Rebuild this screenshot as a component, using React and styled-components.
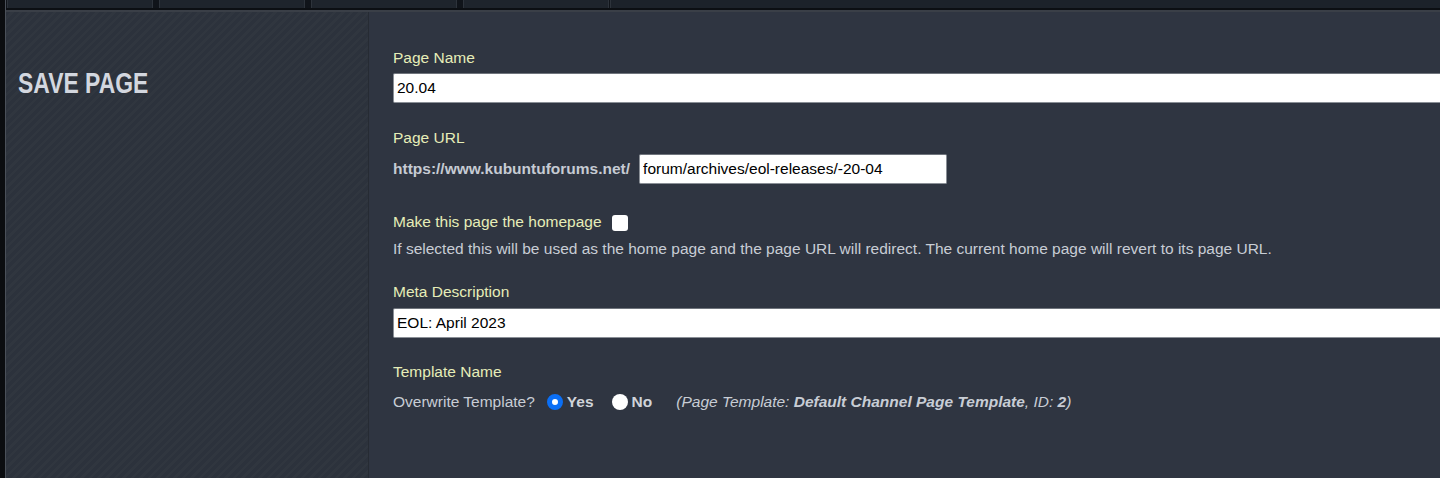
import React from "react";
import styled, { createGlobalStyle } from "styled-components";

const Global = createGlobalStyle`
  html, body {
    margin: 0;
    padding: 0;
    height: 100%;
    background: #0b0d10;
    overflow: hidden;
  }
  #root { height: 100%; }
  * { box-sizing: border-box; }
`;

const Frame = styled.div`
  height: 478px;
  margin-left: 5px;
  border-left: 1px solid #4a5059;
  display: flex;
  flex-direction: column;
  font-family: "Liberation Sans", Arial, Helvetica, sans-serif;
`;

const TabBar = styled.div`
  height: 12px;
  display: flex;
  background: #10141a;
  border-bottom: 2px solid #3a3f47;
  box-shadow: inset 0 -2px 0 #0c0f13;
  padding-bottom: 2px;
`;

const Tab = styled.div`
  width: 146px;
  height: 8px;
  margin-left: ${(p) => (p.$first ? "1px" : "6px")};
  background: #1e242c;
  border-left: 1px solid #2d333b;
  border-right: 1px solid #2d333b;
`;

const TabFill = styled.div`
  flex: 1;
  height: 8px;
  margin-left: 1px;
  background: #1c222a;
  border-left: 1px solid #2d333b;
`;

const Body = styled.div`
  flex: 1;
  display: flex;
  min-height: 0;
`;

const Sidebar = styled.aside`
  width: 363px;
  flex-shrink: 0;
  border-right: 1px solid #262b33;
  padding: 57px 0 0 12px;
  background-color: #2c323c;
  background-image: repeating-linear-gradient(
    135deg,
    #2c323c 0px,
    #2c323c 3.5px,
    #30363f 3.5px,
    #30363f 6px
  );
`;

const Title = styled.h1`
  margin: 0;
  font-size: 29px;
  line-height: 29px;
  font-weight: 700;
  color: #d3d7df;
  transform: scaleX(0.79);
  transform-origin: left center;
  white-space: nowrap;
`;

const Main = styled.main`
  flex: 1;
  background: #2f3541;
  padding: 37px 0 0 24px;
  overflow: hidden;
  font-size: 15.5px;
  line-height: 18px;
`;

const Label = styled.div`
  margin-top: ${(p) => p.$mt || 0}px;
  color: #e6edb8;
  white-space: nowrap;
`;

const TextInput = styled.input`
  display: block;
  margin-top: ${(p) => p.$mt || 0}px;
  width: ${(p) => p.$w || 1100}px;
  height: 30px;
  padding: 0 3px;
  border: 1px solid #8a8f96;
  border-top-color: #6f747c;
  border-radius: 2px;
  background: #ffffff;
  color: #000;
  font-family: "Liberation Sans", Arial, sans-serif;
  font-size: 15.5px;
  outline: none;
`;

const Row = styled.div`
  display: flex;
  align-items: center;
  margin-top: ${(p) => p.$mt || 0}px;
  gap: ${(p) => p.$gap || 0}px;
  white-space: nowrap;
`;

const UrlPrefix = styled.span`
  font-weight: 700;
  color: #c6cbd3;
`;

const Checkbox = styled.span`
  display: inline-block;
  width: 16px;
  height: 16px;
  margin-top: 3px;
  border-radius: 3px;
  background: #ffffff;
`;

const Help = styled.div`
  margin-top: ${(p) => p.$mt || 0}px;
  color: #c8cdd5;
  white-space: nowrap;
`;

const Text = styled.span`
  color: #c8cdd5;
`;

const RadioDot = styled.span`
  display: inline-block;
  width: 16px;
  height: 16px;
  border-radius: 50%;
  background: #ffffff;
  margin-left: ${(p) => p.$ml || 0}px;
  ${(p) =>
    p.$checked &&
    `
    background: #ffffff;
    border: 5px solid #0b6ff5;
  `}
`;

const Choice = styled.span`
  font-weight: 700;
  color: #d0d4da;
  margin-left: ${(p) => p.$ml || 0}px;
`;

const Note = styled.span`
  font-style: italic;
  color: #c8cdd5;
  margin-left: 24px;
  b { font-weight: 700; }
`;

export default function App() {
  return (
    <>
      <Global />
      <Frame>
        <TabBar>
          <Tab $first />
          <Tab />
          <Tab />
          <Tab />
          <TabFill />
        </TabBar>
        <Body>
          <Sidebar>
            <Title>SAVE PAGE</Title>
          </Sidebar>
          <Main>
            <Label>Page Name</Label>
            <TextInput $mt={6} defaultValue="20.04" />

            <Label $mt={26}>Page URL</Label>
            <Row $mt={7} $gap={9}>
              <UrlPrefix>https://www.kubuntuforums.net/</UrlPrefix>
              <TextInput $w={308} defaultValue="forum/archives/eol-releases/-20-04" />
            </Row>

            <Row $mt={28} $gap={10}>
              <Label>Make this page the homepage</Label>
              <Checkbox />
            </Row>
            <Help $mt={9}>
              If selected this will be used as the home page and the page URL will redirect. The current home page will revert to its page URL.
            </Help>

            <Label $mt={25}>Meta Description</Label>
            <TextInput $mt={7} defaultValue="EOL: April 2023" />

            <Label $mt={25}>Template Name</Label>
            <Row $mt={12}>
              <Text>Overwrite Template?</Text>
              <RadioDot $checked $ml={12} />
              <Choice $ml={4}>Yes</Choice>
              <RadioDot $ml={18} />
              <Choice $ml={4}>No</Choice>
              <Note>
                (Page Template: <b>Default Channel Page Template</b>, ID: <b>2</b>)
              </Note>
            </Row>
          </Main>
        </Body>
      </Frame>
    </>
  );
}
